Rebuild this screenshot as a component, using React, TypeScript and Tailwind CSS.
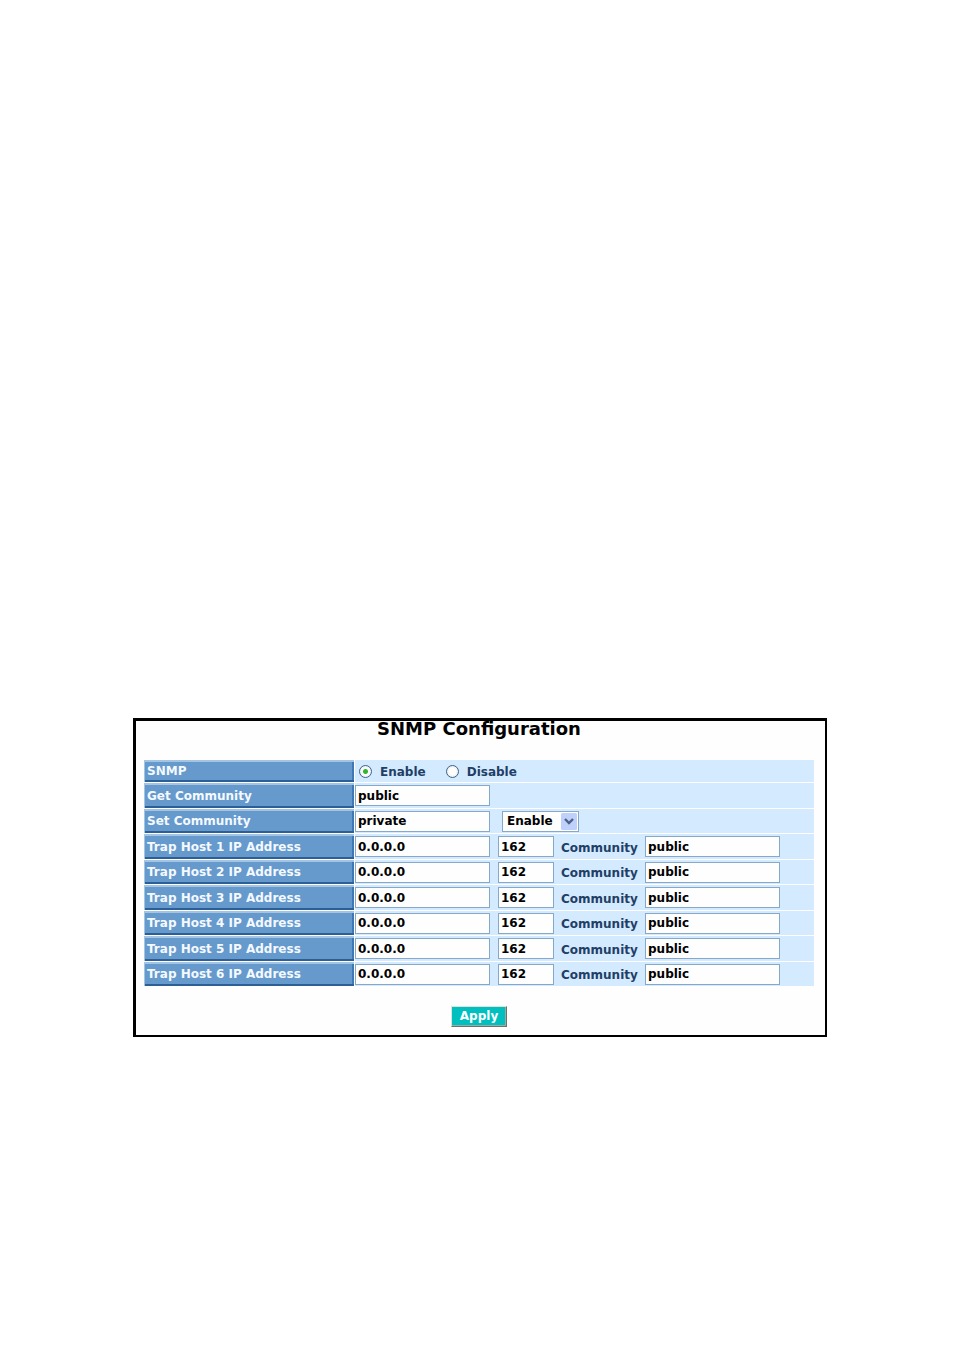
import type React from "react";
import { useState } from "react";

interface TrapHost {
  ip: string;
  port: string;
  community: string;
}

interface RowProps {
  label: string;
  htmlFor?: string;
  first?: boolean;
  children: React.ReactNode;
}

const Row = ({ label, htmlFor, first = false, children }: RowProps) => (
  <tr className={first ? "h-[22px]" : "even:h-[26px] odd:h-[25px]"}>
    <th
      scope="row"
      className={`w-[210px] bg-[#6699cc] p-0 pl-[3px] text-left text-[#f4f9ff] shadow-[inset_1px_0_0_#a3c4e3,inset_0_2px_0_#a3c4e3,inset_0_-2px_0_#2c5f96,inset_-2px_0_0_#3f79b5] ${
        first ? "" : "border-t border-white"
      }`}
    >
      <label htmlFor={htmlFor}>{label}</label>
    </th>
    <td className={`border-l border-white bg-[#d4eaff] p-0 ${first ? "" : "border-t"}`}>
      <div className="flex items-center">{children}</div>
    </td>
  </tr>
);

interface TextBoxProps {
  id: string;
  value: string;
  label?: string;
  short?: boolean;
  onChange: (value: string) => void;
}

const TextBox = ({ id, value, label, short = false, onChange }: TextBoxProps) => (
  <input
    id={id}
    type="text"
    aria-label={label}
    value={value}
    onChange={(e) => onChange(e.target.value)}
    className={`h-[21px] border border-[#86a9c9] bg-[#fefefe] px-0.5 font-bold text-black outline-none ${
      short ? "w-14" : "w-[135px]"
    }`}
  />
);

const radioClass =
  "size-[13px] appearance-none rounded-full border border-[#3a648c] bg-[radial-gradient(circle,#ffffff_40%,#dcdcd7_100%)] checked:bg-[radial-gradient(circle,#2fb52f_0_2px,#ffffff_3px,#e4e4df_100%)]";

const SnmpConfiguration = () => {
  const [snmp, setSnmp] = useState("enable");
  const [getCommunity, setGetCommunity] = useState("public");
  const [setCommunity, setSetCommunity] = useState("private");
  const [setMode, setSetMode] = useState("Enable");
  const [hosts, setHosts] = useState<TrapHost[]>(
    Array.from({ length: 6 }, () => ({ ip: "0.0.0.0", port: "162", community: "public" }))
  );

  const updateHost = (index: number, patch: Partial<TrapHost>) =>
    setHosts(hosts.map((h, i) => (i === index ? { ...h, ...patch } : h)));

  return (
    <form
      onSubmit={(e) => e.preventDefault()}
      className="border-t-3 border-r-2 border-b-2 border-l-3 border-black bg-[#fefefe] pr-[11px] pb-2 pl-2 text-xs leading-4 font-bold text-[#1f3f66]"
    >
      <h1 className="mb-[23px] text-center text-lg leading-4 font-bold text-black">
        SNMP Configuration
      </h1>

      <table className="w-full border-separate border-spacing-0">
        <tbody>
          <Row label="SNMP" first>
            <div className="flex items-center pl-1">
              <input
                id="snmp-enable"
                type="radio"
                name="snmp"
                checked={snmp === "enable"}
                onChange={() => setSnmp("enable")}
                className={radioClass}
              />
              <label htmlFor="snmp-enable" className="pt-0.5 pl-2">
                Enable
              </label>
              <input
                id="snmp-disable"
                type="radio"
                name="snmp"
                checked={snmp === "disable"}
                onChange={() => setSnmp("disable")}
                className={`ml-5 ${radioClass}`}
              />
              <label htmlFor="snmp-disable" className="pt-0.5 pl-2">
                Disable
              </label>
            </div>
          </Row>

          <Row label="Get Community" htmlFor="get-community">
            <TextBox id="get-community" value={getCommunity} onChange={setGetCommunity} />
          </Row>

          <Row label="Set Community" htmlFor="set-community">
            <TextBox id="set-community" value={setCommunity} onChange={setSetCommunity} />
            <div className="relative ml-3">
              <select
                aria-label="Set Community mode"
                value={setMode}
                onChange={(e) => setSetMode(e.target.value)}
                className="block h-[21px] w-[77px] appearance-none border border-[#86a9c9] bg-[#fefefe] pl-1 font-bold text-black"
              >
                <option>Enable</option>
                <option>Disable</option>
              </select>
              <svg
                viewBox="0 0 16 17"
                className="pointer-events-none absolute top-0.5 right-0.5 h-[17px] w-4"
              >
                <rect width="16" height="17" rx="1.5" fill="#bfd1fb" />
                <path d="M4 6l4 4 4-4" fill="none" stroke="#4d6185" strokeWidth="2.4" />
              </svg>
            </div>
          </Row>

          {hosts.map((h, i) => (
            <Row key={i} label={`Trap Host ${i + 1} IP Address`} htmlFor={`ip-${i}`}>
              <TextBox id={`ip-${i}`} value={h.ip} onChange={(ip) => updateHost(i, { ip })} />
              <div className="ml-2 flex items-center">
                <TextBox
                  id={`port-${i}`}
                  label={`Trap Host ${i + 1} port`}
                  short
                  value={h.port}
                  onChange={(port) => updateHost(i, { port })}
                />
                <label htmlFor={`community-${i}`} className="w-[91px] pt-0.5 pl-[7px]">
                  Community
                </label>
                <TextBox
                  id={`community-${i}`}
                  value={h.community}
                  onChange={(community) => updateHost(i, { community })}
                />
              </div>
            </Row>
          ))}
        </tbody>
      </table>

      <div className="mt-5">
        <button
          type="submit"
          className="mx-auto block h-[21px] w-14 border border-t-[#e4e1da] border-r-[#716f64] border-b-[#716f64] border-l-[#e4e1da] bg-[#00bfbf] pb-0.5 leading-4 font-bold text-white shadow-[inset_-1px_-1px_0_#8fb0ab]"
        >
          Apply
        </button>
      </div>
    </form>
  );
};

const App = () => (
  <main className="min-h-screen bg-white pt-[718px] pr-[127px] pl-[133px] font-['DejaVu_Sans',Verdana,sans-serif]">
    <SnmpConfiguration />
  </main>
);

export default App;
